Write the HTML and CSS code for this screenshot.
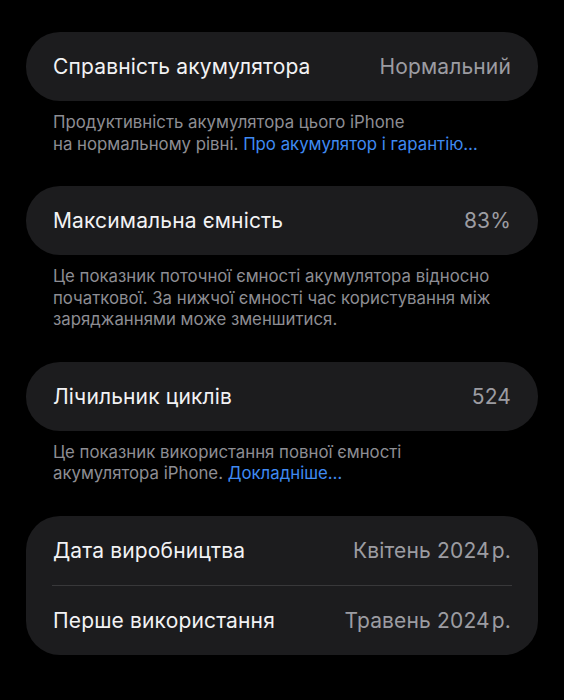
FILE: index.html
```html
<!DOCTYPE html>
<html lang="uk">
<head>
<meta charset="utf-8">
<title>Стан акумулятора</title>
<link rel="stylesheet" href="styles.css">
</head>
<body>
<main class="page">
  <section class="group">
    <div class="card">
      <div class="row"><span class="label">Справність акумулятора</span><span class="value">Нормальний</span></div>
    </div>
    <p class="footer">Продуктивність акумулятора цього iPhone<br>на нормальному рівні. <a class="link" href="#">Про акумулятор і гарантію…</a></p>
  </section>
  <section class="group">
    <div class="card">
      <div class="row"><span class="label">Максимальна ємність</span><span class="value">83%</span></div>
    </div>
    <p class="footer">Це показник поточної ємності акумулятора відносно<br>початкової. За нижчої ємності час користування між<br>заряджаннями може зменшитися.</p>
  </section>
  <section class="group">
    <div class="card">
      <div class="row"><span class="label">Лічильник циклів</span><span class="value">524</span></div>
    </div>
    <p class="footer">Це показник використання повної ємності<br>акумулятора iPhone. <a class="link" href="#">Докладніше…</a></p>
  </section>
  <section class="group">
    <div class="card">
      <div class="row"><span class="label">Дата виробництва</span><span class="value">Квітень 2024&#8202;р.</span></div>
      <div class="sep"></div>
      <div class="row"><span class="label">Перше використання</span><span class="value">Травень 2024&#8202;р.</span></div>
    </div>
  </section>
</main>
</body>
</html>
```
FILE: styles.css
```css
html, body {
  margin: 0;
  padding: 0;
  background: #000;
}
body {
  font-family: Inter, "Noto Sans", "DejaVu Sans", sans-serif;
  color: #fff;
  -webkit-font-smoothing: antialiased;
}
.page {
  padding: 32px 26px 0 26px;
  display: flex;
  flex-direction: column;
  gap: 31px;
}
.group {
  display: flex;
  flex-direction: column;
  gap: 11px;
}
.card {
  background: #1c1c1e;
  border-radius: 34px;
  display: flex;
  flex-direction: column;
}
.row {
  height: 69px;
  padding: 0 27px;
  display: flex;
  align-items: center;
  justify-content: space-between;
  font-size: 21px;
  letter-spacing: 0.15px;
}
.label {
  color: #f2f2f4;
}
.value {
  color: #9c9ca2;
}
.sep {
  height: 1px;
  background: #38383a;
  margin: 0 26px;
}
.footer {
  margin: 0;
  padding: 0 27px;
  font-size: 16.8px;
  line-height: 21.5px;
  color: #8d8d93;
}
.link {
  color: #3f8af2;
  text-decoration: none;
}
```
